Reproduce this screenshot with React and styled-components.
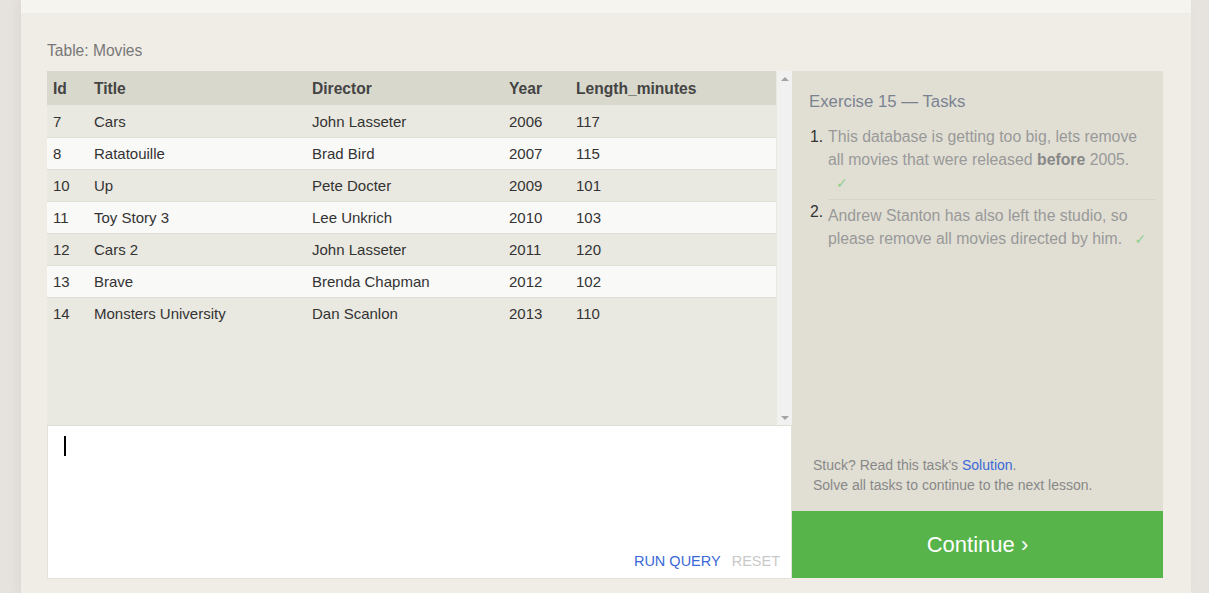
import React from "react";
import styled, { createGlobalStyle } from "styled-components";

const Global = createGlobalStyle`
  html, body { margin: 0; padding: 0; }
  body {
    background: #e6e2de;
    font-family: "Liberation Sans", Arial, sans-serif;
    overflow: hidden;
  }
`;

const Page = styled.div`
  width: 1170px;
  margin-left: 21px;
  height: 593px;
  background: #f0ede6;
  box-shadow: -4px 0 8px rgba(120, 100, 90, 0.07);
  display: flex;
  flex-direction: column;
`;

const TopBand = styled.div`
  height: 13px;
  background: #f6f4ef;
`;

const Section = styled.div`
  padding: 29px 28px 0 26px;
`;

const TableLabel = styled.div`
  font-size: 15.6px;
  line-height: 18px;
  color: #777;
  margin-bottom: 11px;
`;

const Columns = styled.div`
  display: flex;
  align-items: flex-start;
`;

const LeftCol = styled.div`
  width: 745px;
  display: flex;
  flex-direction: column;
`;

const TableArea = styled.div`
  height: 354px;
  display: flex;
  border-bottom: 1px solid #e0ded5;
`;

const TableWrap = styled.div`
  flex: 1;
  background: #eae9e1;
`;

const Table = styled.table`
  width: 729px;
  border-collapse: collapse;
  table-layout: fixed;
`;

const Th = styled.th`
  width: ${(p) => p.w}px;
  height: 34px;
  padding: 2px 6px 0;
  text-align: left;
  font-size: 15.6px;
  font-weight: bold;
  color: #444;
  background: #d9d8cc;
  box-sizing: border-box;
`;

const Tr = styled.tr`
  background: ${(p) => (p.even ? "#f9f9f8" : "#eae9e1")};
  border-top: ${(p) => (p.first ? "none" : "1px solid #dfddd5")};
`;

const Td = styled.td`
  height: 32px;
  box-sizing: border-box;
  padding: 1px 6px 0;
  font-size: 15px;
  color: #333;
  white-space: nowrap;
`;

const Scrollbar = styled.div`
  width: 15px;
  background: #f1f1f1;
  display: flex;
  flex-direction: column;
  justify-content: space-between;
  align-items: center;
  padding: 6px 0 5px;
  box-sizing: border-box;
`;

const Arrow = styled.div`
  width: 0;
  height: 0;
  border-left: 4px solid transparent;
  border-right: 4px solid transparent;
  ${(p) =>
    p.down
      ? "border-top: 4px solid #a3a3a3;"
      : "border-bottom: 4px solid #a3a3a3;"}
`;

const Editor = styled.div`
  height: 153px;
  background: #fff;
  border: 1px solid #e4e1da;
  border-top: none;
  box-sizing: border-box;
  display: flex;
  flex-direction: column;
  justify-content: space-between;
  padding: 10px 11px 8px 16px;
`;

const Caret = styled.div`
  width: 2px;
  height: 20px;
  background: #000;
`;

const EditorActions = styled.div`
  display: flex;
  justify-content: flex-end;
  gap: 11px;
`;

const ActionButton = styled.span`
  font-size: 14.5px;
  line-height: 18px;
  color: ${(p) => (p.muted ? "#c9c9c9" : "#3b68d8")};
  text-transform: uppercase;
`;

const RightCol = styled.div`
  width: 371px;
  display: flex;
  flex-direction: column;
  height: 507px;
`;

const TaskPanel = styled.div`
  flex: 1;
  background: #e1dfd4;
  display: flex;
  flex-direction: column;
  padding: 21px 7px 0 17px;
`;

const TaskTitle = styled.div`
  font-size: 16.8px;
  line-height: 20px;
  color: #7a8290;
  margin-bottom: 13px;
`;

const TaskList = styled.div`
  display: flex;
  flex-direction: column;
`;

const TaskItem = styled.div`
  display: flex;
  font-size: 15.8px;
  line-height: 23px;
`;

const TaskNum = styled.span`
  width: 18px;
  flex: none;
  padding-left: 1px;
  color: #333;
`;

const TaskText = styled.div`
  flex: 1;
  color: #999;
  padding: ${(p) => (p.first ? "0 7px 4px 0" : "4px 7px 0 0")};
  border-bottom: ${(p) => (p.first ? "1px solid #d6d4ca" : "none")};
  b { color: #888; }
`;

const Check = styled.span`
  color: #8fd08f;
  margin-left: 8px;
  font-size: 14px;
  font-family: "DejaVu Sans", sans-serif;
`;

const Spacer = styled.div`
  flex: 1;
`;

const Footer = styled.div`
  font-size: 14px;
  line-height: 20px;
  color: #888;
  padding: 0 0 16px 4px;
`;

const Link = styled.a`
  color: #3b68d8;
  text-decoration: none;
`;

const ContinueButton = styled.div`
  height: 67px;
  background: #57b44a;
  color: #fff;
  font-size: 22px;
  display: flex;
  align-items: center;
  justify-content: center;
`;

const rows = [
  [7, "Cars", "John Lasseter", 2006, 117],
  [8, "Ratatouille", "Brad Bird", 2007, 115],
  [10, "Up", "Pete Docter", 2009, 101],
  [11, "Toy Story 3", "Lee Unkrich", 2010, 103],
  [12, "Cars 2", "John Lasseter", 2011, 120],
  [13, "Brave", "Brenda Chapman", 2012, 102],
  [14, "Monsters University", "Dan Scanlon", 2013, 110],
];

const cols = [
  ["Id", 41],
  ["Title", 218],
  ["Director", 197],
  ["Year", 67],
  ["Length_minutes", 206],
];

export default function App() {
  return (
    <>
      <Global />
      <Page>
        <TopBand />
        <Section>
          <TableLabel>Table: Movies</TableLabel>
          <Columns>
            <LeftCol>
              <TableArea>
                <TableWrap>
                  <Table>
                    <thead>
                      <tr>
                        {cols.map(([c, w]) => (
                          <Th key={c} w={w}>
                            {c}
                          </Th>
                        ))}
                      </tr>
                    </thead>
                    <tbody>
                      {rows.map((r, i) => (
                        <Tr key={r[0]} even={i % 2 === 1} first={i === 0}>
                          {r.map((v, j) => (
                            <Td key={j}>{v}</Td>
                          ))}
                        </Tr>
                      ))}
                    </tbody>
                  </Table>
                </TableWrap>
                <Scrollbar>
                  <Arrow />
                  <Arrow down />
                </Scrollbar>
              </TableArea>
              <Editor>
                <Caret />
                <EditorActions>
                  <ActionButton>Run Query</ActionButton>
                  <ActionButton muted>Reset</ActionButton>
                </EditorActions>
              </Editor>
            </LeftCol>
            <RightCol>
              <TaskPanel>
                <TaskTitle>Exercise 15 — Tasks</TaskTitle>
                <TaskList>
                  <TaskItem>
                    <TaskNum>1.</TaskNum>
                    <TaskText first>
                      This database is getting too big, lets remove all movies
                      that were released <b>before</b> 2005. <Check>✓</Check>
                    </TaskText>
                  </TaskItem>
                  <TaskItem>
                    <TaskNum>2.</TaskNum>
                    <TaskText>
                      Andrew Stanton has also left the studio, so please remove
                      all movies directed by him. <Check>✓</Check>
                    </TaskText>
                  </TaskItem>
                </TaskList>
                <Spacer />
                <Footer>
                  Stuck? Read this task's <Link href="#">Solution</Link>.
                  <br />
                  Solve all tasks to continue to the next lesson.
                </Footer>
              </TaskPanel>
              <ContinueButton>Continue ›</ContinueButton>
            </RightCol>
          </Columns>
        </Section>
      </Page>
    </>
  );
}
